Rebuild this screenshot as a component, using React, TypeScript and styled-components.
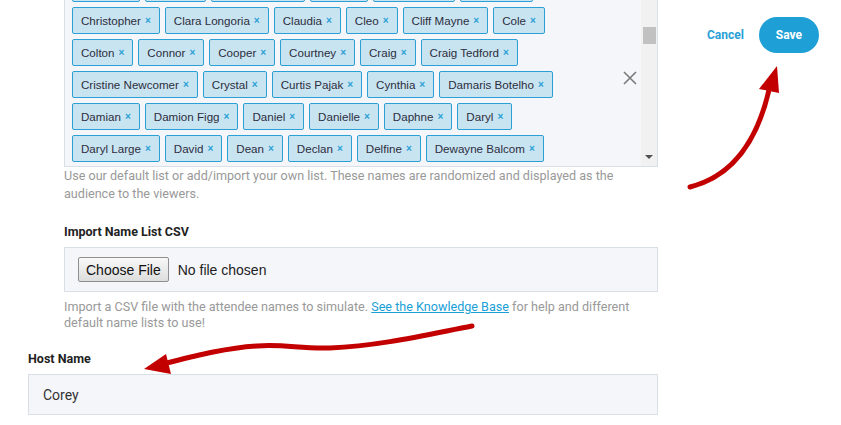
import React from 'react';
import styled, { createGlobalStyle } from 'styled-components';

const GlobalStyle = createGlobalStyle`
  html, body {
    margin: 0;
    padding: 0;
    background: #ffffff;
  }
  body {
    font-family: Roboto, "Liberation Sans", Arial, sans-serif;
  }
`;

const tagRows: string[][] = [
  ['Charles', 'Chase', 'Chelsey Ray', 'Chloe', 'Chris Ford', 'Christian'],
  ['Christopher', 'Clara Longoria', 'Claudia', 'Cleo', 'Cliff Mayne', 'Cole'],
  ['Colton', 'Connor', 'Cooper', 'Courtney', 'Craig', 'Craig Tedford'],
  ['Cristine Newcomer', 'Crystal', 'Curtis Pajak', 'Cynthia', 'Damaris Botelho'],
  ['Damian', 'Damion Figg', 'Daniel', 'Danielle', 'Daphne', 'Daryl'],
  ['Daryl Large', 'David', 'Dean', 'Declan', 'Delfine', 'Dewayne Balcom'],
  ['Derek', 'Derrick Ho', 'Devin', 'Dexter', 'Diana', 'Diego', 'Dominic'],
];

const Page = styled.div`
  position: relative;
  width: 841px;
  height: 425px;
  overflow: hidden;
  display: flex;
  align-items: flex-start;
`;

const Main = styled.div`
  width: 630px;
  margin-left: 28px;
  display: flex;
  flex-direction: column;
`;

const Nested = styled.div`
  margin-left: 36px;
  margin-top: -31px;
  display: flex;
  flex-direction: column;
`;

const TagBox = styled.div`
  height: 198px;
  box-sizing: border-box;
  display: flex;
  background: #f5f6fa;
  border: 1px solid #d8dfe6;
  overflow: hidden;
`;

const TagArea = styled.div`
  flex: 1;
  padding: 5px 0 0 7px;
  display: flex;
  flex-direction: column;
  gap: 5px;
`;

const TagRow = styled.div`
  display: flex;
  gap: 5px;
`;

const Tag = styled.span`
  flex-shrink: 0;
  display: inline-flex;
  align-items: center;
  height: 27px;
  box-sizing: border-box;
  padding: 0 8px;
  background: #c8e4f1;
  border: 1px solid #2ba0d6;
  border-radius: 2px;
  font-family: "Liberation Sans", Arial, sans-serif;
  font-size: 11.6px;
  color: #2d2d3d;
  white-space: nowrap;
`;

const Remove = styled.span`
  margin-left: 4px;
  font-size: 10px;
  font-weight: 700;
  color: #2a9fd6;
`;

const ClearCol = styled.div`
  width: 22px;
  display: flex;
  align-items: center;
  justify-content: center;
  padding-top: 20px;
`;

const ScrollTrack = styled.div`
  width: 16px;
  background: #f1f1f1;
  display: flex;
  flex-direction: column;
  align-items: center;
`;

const ScrollThumb = styled.div`
  width: 13px;
  height: 17px;
  margin-top: 57px;
  background: #c1c1c1;
`;

const ScrollArrow = styled.div`
  margin-top: auto;
  margin-bottom: 7px;
  width: 0;
  height: 0;
  border-left: 4px solid transparent;
  border-right: 4px solid transparent;
  border-top: 4px solid #505050;
`;

const Desc = styled.p`
  margin: 0;
  font-size: 12.6px;
  line-height: 18px;
  color: #999;
`;

const Label = styled.div<{ $gap: number }>`
  margin-top: ${({ $gap }) => $gap}px;
  font-size: 12.5px;
  font-weight: 700;
  line-height: 18px;
  color: #222;
`;

const FileBox = styled.div`
  margin-top: 6px;
  height: 45px;
  box-sizing: border-box;
  display: flex;
  align-items: center;
  padding-left: 13px;
  background: #f5f6fa;
  border: 1px solid #d8dfe6;
`;

const ChooseButton = styled.button`
  height: 25px;
  padding: 0 7px;
  font-family: "Liberation Sans", Arial, sans-serif;
  font-size: 14px;
  color: #111;
  border: 1px solid #8f8f8f;
  border-radius: 2px;
  background: linear-gradient(#f8f8f8, #dddddd);
`;

const FileName = styled.span`
  margin-left: 9px;
  font-family: "Liberation Sans", Arial, sans-serif;
  font-size: 14px;
  color: #222;
`;

const Help = styled.p`
  margin: 7px 0 0;
  font-size: 12.6px;
  line-height: 16px;
  color: #999;

  a {
    color: #1a9fd6;
    text-decoration: underline;
  }
`;

const TextInput = styled.div`
  margin-top: 6px;
  height: 41px;
  box-sizing: border-box;
  display: flex;
  align-items: center;
  padding-left: 14px;
  background: #f5f6fa;
  border: 1px solid #d8dfe6;
  font-size: 14px;
  color: #333;
`;

const Actions = styled.div`
  margin-left: 49px;
  margin-top: 17px;
  display: flex;
  align-items: center;
  gap: 15px;
`;

const CancelLink = styled.span`
  font-size: 12px;
  font-weight: 700;
  color: #2a9fd6;
`;

const SaveButton = styled.button`
  width: 60px;
  height: 36px;
  border: none;
  border-radius: 18px;
  background: #1e9fd5;
  color: #fff;
  font-family: Roboto, sans-serif;
  font-size: 12px;
  font-weight: 700;
`;

const Annotations = styled.svg`
  position: absolute;
  left: 0;
  top: 0;
  pointer-events: none;
`;

const App: React.FC = () => {
  return (
    <Page>
      <GlobalStyle />
      <Main>
        <Nested>
          <TagBox>
            <TagArea>
              {tagRows.map((row, i) => (
                <TagRow key={i}>
                  {row.map(name => (
                    <Tag key={name}>
                      {name}
                      <Remove>×</Remove>
                    </Tag>
                  ))}
                </TagRow>
              ))}
            </TagArea>
            <ClearCol>
              <svg width="14" height="14" viewBox="0 0 14 14">
                <path d="M1 1L13 13M13 1L1 13" stroke="#7a7a7a" strokeWidth="1.6" />
              </svg>
            </ClearCol>
            <ScrollTrack>
              <ScrollThumb />
              <ScrollArrow />
            </ScrollTrack>
          </TagBox>
          <Desc>
            Use our default list or add/import your own list. These names are randomized and displayed as the
            audience to the viewers.
          </Desc>
          <Label $gap={20}>Import Name List CSV</Label>
          <FileBox>
            <ChooseButton>Choose File</ChooseButton>
            <FileName>No file chosen</FileName>
          </FileBox>
          <Help>
            Import a CSV file with the attendee names to simulate. <a>See the Knowledge Base</a> for help and different
            default name lists to use!
          </Help>
        </Nested>
        <Label $gap={19}>Host Name</Label>
        <TextInput>Corey</TextInput>
      </Main>
      <Actions>
        <CancelLink>Cancel</CancelLink>
        <SaveButton>Save</SaveButton>
      </Actions>
      <Annotations width="841" height="425" viewBox="0 0 841 425">
        <path d="M690 187 Q750 172 769 90" fill="none" stroke="#c20000" strokeWidth="5" strokeLinecap="round" />
        <polygon points="777,66 759,89 779,93" fill="#c20000" />
        <path
          d="M472 326 C430 334 380 346 330 348 C300 349 285 344 257 346 C225 348 195 356 163 364"
          fill="none"
          stroke="#c20000"
          strokeWidth="5"
          strokeLinecap="round"
        />
        <polygon points="144,369 166,354 171,374" fill="#c20000" />
      </Annotations>
    </Page>
  );
};

export default App;
